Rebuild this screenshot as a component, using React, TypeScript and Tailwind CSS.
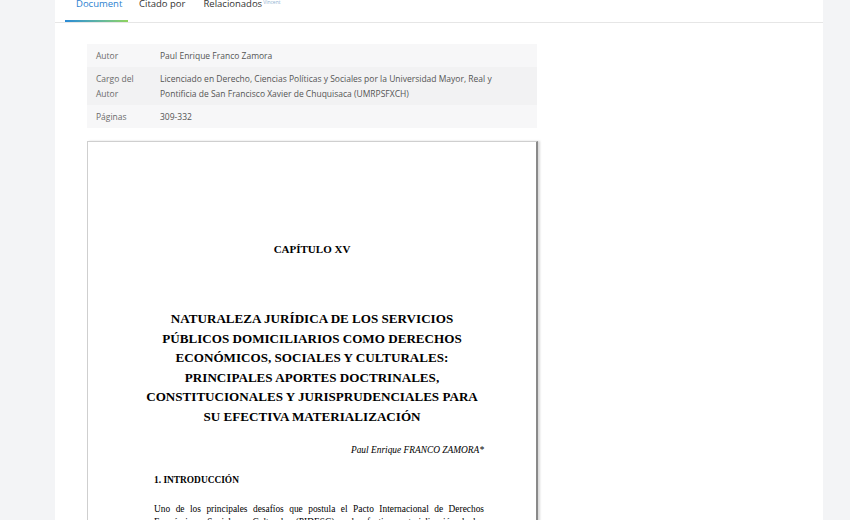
export default function App() {
  const rows = [
    { label: "Autor", value: "Paul Enrique Franco Zamora", h: "h-[23px]" },
    {
      label: "Cargo del Autor",
      value:
        "Licenciado en Derecho, Ciencias Políticas y Sociales por la Universidad Mayor, Real y Pontificia de San Francisco Xavier de Chuquisaca (UMRPSFXCH)",
      h: "h-[38px]",
    },
    { label: "Páginas", value: "309-332", h: "h-[23px]" },
  ];

  return (
    <div className="flex h-[520px] w-[850px] overflow-hidden bg-[#f3f4f6] font-['Open_Sans',sans-serif]">
      <div className="w-[55px] shrink-0" />
      <div className="w-[768px] shrink-0 bg-white">
        {/* tabs */}
        <div className="flex h-[23px] border-b border-[#e6e6e6] pl-[10px]">
          <div className="flex w-[63px] flex-col justify-between">
            <span className="-mt-[3px] pl-[11px] text-[9.5px] leading-[13px] text-[#2b7fd0]">Document</span>
            <div className="h-[2px] bg-gradient-to-r from-[#2a8ad6] to-[#8fd35a]" />
          </div>
          <div className="ml-[11px] -mt-[3px] text-[9.5px] leading-[13px] text-[#333]">Citado por</div>
          <div className="ml-[18px] -mt-[3px] flex items-start text-[9.5px] leading-[13px] text-[#333]">
            Relacionados
            <span className="ml-[1px] mt-[2px] text-[5px] leading-[6px] text-[#8fb0d0]">Vincent</span>
          </div>
        </div>

        <div className="pl-[32px] pt-[21px]">
          {/* meta table */}
          <div className="w-[450px] text-[8.5px] leading-[15px]">
            {rows.map((r, i) => (
              <div
                key={r.label}
                className={`flex items-center ${r.h} ${i % 2 === 1 ? "bg-[#f2f2f3]" : "bg-[#f7f7f8]"}`}
              >
                <div className="w-[73px] shrink-0 pl-[9px] pr-[14px] text-[#6b6b6b]">{r.label}</div>
                <div className="pr-[30px] text-[#555]">{r.value}</div>
              </div>
            ))}
          </div>

          {/* document page */}
          <div className="mt-[13px] h-[400px] w-[451px] border-t border-l border-[#cfcfcf] border-r-2 border-r-[#8a8a8a] shadow-[2px_0_2px_rgba(0,0,0,0.15)] font-['Liberation_Serif',serif] text-black">
            <div className="pt-[101px] text-center text-[11px] font-bold leading-[13px]">CAPÍTULO XV</div>
            <div className="mt-[53px] text-center text-[13.1px] font-bold leading-[19.6px]">
              NATURALEZA JURÍDICA DE LOS SERVICIOS
              <br />
              PÚBLICOS DOMICILIARIOS COMO DERECHOS
              <br />
              ECONÓMICOS, SOCIALES Y CULTURALES:
              <br />
              PRINCIPALES APORTES DOCTRINALES,
              <br />
              CONSTITUCIONALES Y JURISPRUDENCIALES PARA
              <br />
              SU EFECTIVA MATERIALIZACIÓN
            </div>
            <div className="pl-[66px] pr-[52px]">
              <div className="mt-[17px] text-right text-[9.4px] italic leading-[12px]">
                Paul Enrique FRANCO ZAMORA*
              </div>
              <div className="mt-[18px] text-[9.4px] font-bold leading-[12px]">1. INTRODUCCIÓN</div>
              <p className="mt-[17px] text-justify text-[9.4px] leading-[13px]">
                Uno de los principales desafíos que postula el Pacto Internacional de Derechos
                Económicos, Sociales y Culturales (PIDESC) es la efectiva materialización de los
                derechos que reconoce a favor de las personas.
              </p>
            </div>
          </div>
        </div>
      </div>
      <div className="flex-1 bg-[#f3f4f6]" />
    </div>
  );
}
